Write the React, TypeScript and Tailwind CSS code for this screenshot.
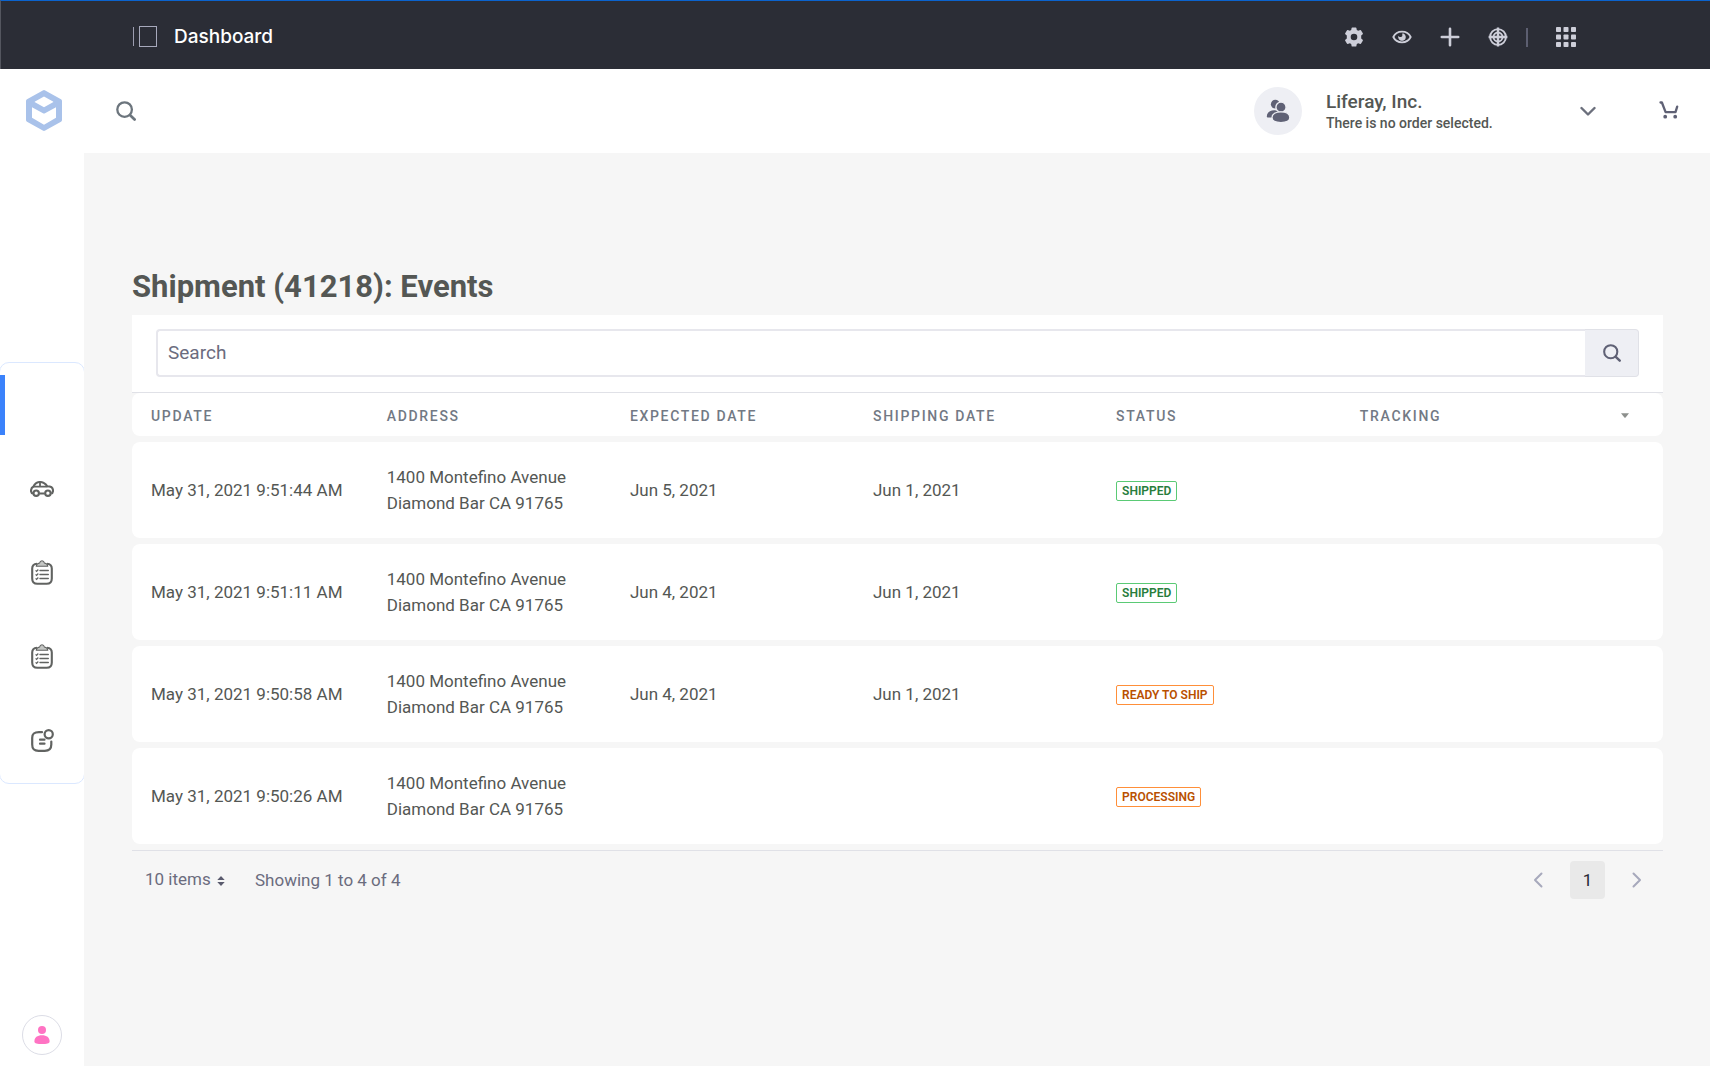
import React from "react";

type Tone = "success" | "warning";

interface Shipment {
  update: string;
  expected: string;
  shipping: string;
  status: string;
  tone: Tone;
}

const shipments: Shipment[] = [
  { update: "May 31, 2021 9:51:44 AM", expected: "Jun 5, 2021", shipping: "Jun 1, 2021", status: "SHIPPED", tone: "success" },
  { update: "May 31, 2021 9:51:11 AM", expected: "Jun 4, 2021", shipping: "Jun 1, 2021", status: "SHIPPED", tone: "success" },
  { update: "May 31, 2021 9:50:58 AM", expected: "Jun 4, 2021", shipping: "Jun 1, 2021", status: "READY TO SHIP", tone: "warning" },
  { update: "May 31, 2021 9:50:26 AM", expected: "", shipping: "", status: "PROCESSING", tone: "warning" },
];

const toneClass: Record<Tone, string> = {
  success: "border-[#5aca75] text-[#287d3c]",
  warning: "border-[#ff8f39] text-[#b95000]",
};

function GearIcon() {
  return (
    <svg viewBox="0 0 20 20" className="size-5" fill="currentColor" aria-hidden="true">
      <path
        fillRule="evenodd"
        d="M7.600 1Q7.700 .4 8.300 .4h3.400q.6 0 .7.600l.4 2 1.400.8 2-.7q.6-.2.900.3l1.700 2.900q.300.500-.1.900L17.200 8.600v2.800l1.500 1.400q.400.400.1.900L17.100 16.600q-.3.500-.9.300L14.200 16.200l-1.400.8-.4 2q-.1.600-.7.600H8.300q-.6 0-.7-.6l-.4-2L5.800 16.200l-2 .7q-.6.200-.9-.3L1.200 13.700q-.3-.5.1-.9l1.500-1.400V8.600L1.300 7.200q-.4-.4-.1-.9L2.900 3.400q.3-.5.9-.3L5.800 3.800 7.200 3zM10 6.700a3.300 3.300 0 1 0 0 6.600 3.300 3.300 0 0 0 0-6.600z"
      />
    </svg>
  );
}

function EyeIcon() {
  return (
    <svg viewBox="0 0 20 20" className="size-5" fill="none" aria-hidden="true">
      <path d="M1.300 10C3 6.500 6.200 4.700 10 4.700s7 1.800 8.700 5.300c-1.700 3.500-4.900 5.300-8.700 5.300S3 13.500 1.300 10z" stroke="currentColor" strokeWidth="1.800" strokeLinejoin="round" />
      <path fillRule="evenodd" d="M10.600 6.300a3.800 3.800 0 1 1-4.200 2.500c.5 1 1.500 1.500 2.500 1.200 1.100-.2 1.700-1.200 1.400-2.300-.1-.6 0-1 .3-1.400z" fill="currentColor" />
    </svg>
  );
}

function PlusIcon() {
  return (
    <svg viewBox="0 0 20 20" className="size-5" fill="none" stroke="currentColor" strokeWidth="2.600" strokeLinecap="round" aria-hidden="true">
      <path d="M10 1.800v16.400M1.800 10h16.400" />
    </svg>
  );
}

function TargetIcon() {
  return (
    <svg viewBox="0 0 20 20" className="size-5" fill="none" stroke="currentColor" strokeWidth="1.900" aria-hidden="true">
      <circle cx="10" cy="10" r="7.900" />
      <circle cx="10" cy="10" r="4.500" />
      <path d="M10 .6v18.800M.6 10h18.800" strokeWidth="2.400" />
    </svg>
  );
}

function GridIcon() {
  return (
    <svg viewBox="0 0 20 20" className="size-5" fill="currentColor" aria-hidden="true">
      {[0, 7.5, 15].map((y) => [0, 7.5, 15].map((x) => <rect key={`${x}-${y}`} x={x} y={y} width="5" height="5" rx="0.800" />))}
    </svg>
  );
}

function SearchIcon({ className }: { className: string }) {
  return (
    <svg viewBox="0 0 20 20" className={className} fill="none" stroke="currentColor" strokeWidth="2.300" strokeLinecap="round" aria-hidden="true">
      <circle cx="8.600" cy="8.600" r="7.300" />
      <path d="M14.200 14.200l4.400 4.300" strokeWidth="2.700" />
    </svg>
  );
}

function LogoIcon() {
  return (
    <svg viewBox="0 0 36 41" className="mb-0.5 h-[41px] w-9" aria-hidden="true">
      <path
        fill="#a9c2ea"
        fillRule="evenodd"
        d="M16.800.4q1.200-.6 2.400 0L35 9.300q1 .6 1 1.800v18.800q0 1.200-1 1.800l-15.800 8.900q-1.200.6-2.400 0L1 31.700q-1-.6-1-1.800V11.100q0-1.200 1-1.800zM18 6.400L9 11.500q-.6.400 0 .8l9 5 9-5q.6-.4 0-.8zM6 17.200v10.500l12 7 12-7V17.200l-11 6.100q-1 .5-2 0z"
      />
    </svg>
  );
}

function UsersIcon() {
  return (
    <svg viewBox="0 0 24 24" className="size-6" fill="#5f6175" aria-hidden="true">
      <circle cx="9.300" cy="5.200" r="4.400" />
      <path d="M.8 17.800C.6 13.600 4.300 11 8.600 11.200L13 12 7.500 18.600H1.700q-.8 0-.9-.8z" />
      <circle cx="15" cy="8.200" r="5.100" stroke="#eeeff4" strokeWidth="1.400" />
      <path d="M6 18.600c0-3.700 3.800-5.800 8.900-5.800s8.900 2.100 8.900 5.800-3.800 4.900-8.900 4.900-8.900-1.200-8.900-4.900z" stroke="#eeeff4" strokeWidth="1.200" />
    </svg>
  );
}

function CartIcon() {
  return (
    <svg viewBox="0 0 20 18" className="mb-0.5 h-[18px] w-5" fill="none" stroke="#5f6175" strokeWidth="2.300" strokeLinecap="round" strokeLinejoin="round" aria-hidden="true">
      <path d="M1.500 1.500h1.400l3.700 9.700h9.900l1.700-5.500" />
      <circle cx="6.200" cy="15.700" r="1" fill="#5f6175" strokeWidth="1.800" />
      <circle cx="16.200" cy="15.700" r="1" fill="#5f6175" strokeWidth="1.800" />
    </svg>
  );
}

function CarIcon() {
  return (
    <svg viewBox="0 0 24 16" className="h-4 w-6" fill="none" stroke="#616361" strokeWidth="2.100" strokeLinejoin="round" aria-hidden="true">
      <path d="M3 12.500C1.600 12.300 1 11.300 1 9.800 1 7.500 2 6.300 3.500 5.500 5 2.300 7 1 10 1c3.200 0 5.300 1.300 7.300 4.300 3.700 0 5.700 1.200 5.700 4.200 0 1.900-.6 2.800-1.800 3M9.300 12.500h5.500" />
      <path d="M3.500 5.700h14M10 1v4.500" strokeWidth="1.800" />
      <circle cx="6.200" cy="12.200" r="2.700" />
      <circle cx="17.900" cy="12.200" r="2.700" />
    </svg>
  );
}

function ClipboardIcon() {
  return (
    <svg viewBox="0 0 22 25" className="mb-0.5 h-[25px] w-[22px]" fill="none" stroke="#616361" aria-hidden="true">
      <path d="M6 3.700C2.600 3.900 1.200 5.400 1.200 8.600v9.800c0 3.800 1.600 5.400 5.200 5.400h9.200c3.600 0 5.200-1.600 5.200-5.400V8.600c0-3.200-1.400-4.700-4.800-4.900" strokeWidth="2.100" />
      <path d="M5.300 6.200c0-2.200 1.400-2.900 3.300-3.200C8.900 1.500 9.700.8 11 .8s2.100.7 2.400 2.200c1.900.3 3.300 1 3.300 3.200z" strokeWidth="1.100" fill="#c4c6c4" />
      <path d="M9 10.500h8.300M9 14.500h8.300M9 18.500h8.300" strokeWidth="1.400" strokeLinecap="round" />
      <path d="M4.600 10.400l1 1L7.300 9.500M4.600 14.400l1 1 1.700-1.900M4.600 18.400l1 1 1.700-1.900" strokeWidth="1.200" />
    </svg>
  );
}

function NoteIcon() {
  return (
    <svg viewBox="0 0 23 23" className="mb-0.5 size-[23px]" fill="none" stroke="#616361" strokeWidth="2.200" strokeLinecap="round" aria-hidden="true">
      <path d="M11 3.200H8C3 3.200 1.200 4.700 1.200 9v6.500c0 4.600 1.700 6.300 6.300 6.300h6.300c4.600 0 6.500-1.700 6.500-6.300v-3" />
      <circle cx="17.700" cy="5.300" r="4.100" />
      <path d="M9 10.700h4.500M9 14.700h4.500" />
    </svg>
  );
}

function Chevron({ points, className, width = 2 }: { points: string; className: string; width?: number }) {
  return (
    <svg viewBox="0 0 16 16" className={className} fill="none" stroke="currentColor" strokeWidth={width} strokeLinecap="round" strokeLinejoin="round" aria-hidden="true">
      <polyline points={points} />
    </svg>
  );
}

function TopBar() {
  return (
    <header className="flex h-[69px] shrink-0 items-center justify-between border-t border-l border-t-[#0b63ce] border-l-[#54565f] bg-[#2b2d36] pr-[134px] pl-[132px]">
      <div className="flex items-center">
        <span className="mt-0.5 h-[19px] w-px bg-[#9c9db0]" />
        <span className="mt-0.5 ml-[5px] h-[21px] w-[18px] border border-[#a7a9bc]" />
        <h1 className="mt-1 ml-[17px] font-[Inter] text-[19px] leading-6 font-medium text-white">Dashboard</h1>
      </div>
      <nav aria-label="Tools" className="mt-1 flex items-center text-[#cdced9]">
        <div className="flex gap-7">
          <button type="button" aria-label="Settings"><GearIcon /></button>
          <button type="button" aria-label="Preview"><EyeIcon /></button>
          <button type="button" aria-label="Add"><PlusIcon /></button>
          <button type="button" aria-label="Simulation"><TargetIcon /></button>
        </div>
        <span className="mr-7 ml-[18px] h-[19px] w-0.5 bg-[#5c5e70]" />
        <button type="button" aria-label="Applications"><GridIcon /></button>
      </nav>
    </header>
  );
}

function Sidebar() {
  const items = [
    { label: "Catalog", icon: <CarIcon /> },
    { label: "Orders", icon: <ClipboardIcon /> },
    { label: "Lists", icon: <ClipboardIcon /> },
    { label: "Shipments", icon: <NoteIcon /> },
  ];
  return (
    <aside className="flex w-[84px] shrink-0 flex-col overflow-hidden bg-white">
      <a href="#home" aria-label="Home" className="flex h-[84px] items-center pl-[26px]">
        <LogoIcon />
      </a>
      <div className="flex-1" />
      <nav aria-label="Main" className="-mx-px rounded-[10px] border border-[#dbe8ff]">
        <a href="#dashboard" aria-label="Overview" className="flex h-[84px] items-center">
          <span className="h-[60px] w-[5px] bg-[#3b82fb]" />
        </a>
        {items.map((item) => (
          <a key={item.label} href={`#${item.label.toLowerCase()}`} aria-label={item.label} className="flex h-[84px] items-center justify-center">
            {item.icon}
          </a>
        ))}
      </nav>
      <div className="flex-1" />
      <div className="flex h-[73px] items-end justify-center pb-[11px]">
        <button type="button" aria-label="User profile" className="flex size-10 items-center justify-center rounded-full border border-[#dcdde6]">
          <svg viewBox="0 0 16 18" className="h-[18px] w-4" fill="#ff73c3" aria-hidden="true">
            <circle cx="8" cy="4" r="4" />
            <path d="M.4 15.500C.4 11.500 3.300 9.300 8 9.300s7.600 2.200 7.600 6.200c0 1.900-3 2.500-7.600 2.500S.4 17.400.4 15.500z" />
          </svg>
        </button>
      </div>
    </aside>
  );
}

function StoreHeader() {
  return (
    <div className="flex h-[84px] shrink-0 items-center justify-between bg-white pr-[31px] pl-8">
      <button type="button" aria-label="Search the store" className="text-[#6c757d]">
        <SearchIcon className="size-5" />
      </button>
      <div className="flex items-center">
        <button type="button" className="flex items-center text-left text-[#545754]">
          <span className="flex size-12 items-center justify-center rounded-full bg-[#eeeff4]">
            <UsersIcon />
          </span>
          <span className="ml-6 flex w-[252px] flex-col font-medium">
            <span className="text-[19px] leading-6">Liferay, Inc.</span>
            <span className="text-sm leading-[18px]">There is no order selected.</span>
          </span>
          <Chevron points="1.500,5 8,11.500 14.500,5" width={2.4} className="ml-0.5 size-4 text-[#6b6f7c]" />
        </button>
        <button type="button" aria-label="Cart" className="ml-[63px]">
          <CartIcon />
        </button>
      </div>
    </div>
  );
}

function ShipmentTable() {
  const th = "px-[19px] pt-0.5 text-left font-medium";
  const td = "px-[19px]";
  return (
    <table className="-mt-1.5 w-full table-fixed border-separate border-spacing-x-0 border-spacing-y-1.5 text-[#545754]">
      <colgroup>
        <col className="w-[15.4%]" />
        <col className="w-[15.88%]" />
        <col className="w-[15.88%]" />
        <col className="w-[15.88%]" />
        <col className="w-[15.92%]" />
        <col />
      </colgroup>
      <thead>
        <tr className="h-[43px] bg-white text-sm tracking-[0.12em] text-[#727984]">
          <th scope="col" className={`${th} rounded-l-lg`}>UPDATE</th>
          <th scope="col" className={th}>ADDRESS</th>
          <th scope="col" className={th}>EXPECTED DATE</th>
          <th scope="col" className={th}>SHIPPING DATE</th>
          <th scope="col" className={th}>STATUS</th>
          <th scope="col" className="rounded-r-lg pt-0.5 pr-[34px] pl-[19px] text-left font-medium">
            <span className="flex items-center justify-between">
              TRACKING
              <button type="button" aria-label="Choose columns">
                <svg viewBox="0 0 8 5" className="h-[5px] w-2" fill="#8d908d" aria-hidden="true">
                  <path d="M0 .2h8L4.600 4.500q-.6.600-1.200 0z" />
                </svg>
              </button>
            </span>
          </th>
        </tr>
      </thead>
      <tbody>
        {shipments.map((row) => (
          <tr key={row.update} className="h-24 bg-white text-[17px] leading-[26px]">
            <td className={`${td} rounded-l-lg whitespace-nowrap`}>{row.update}</td>
            <td className={td}>
              1400 Montefino Avenue
              <br />
              Diamond Bar CA 91765
            </td>
            <td className={td}>{row.expected}</td>
            <td className={td}>{row.shipping}</td>
            <td className={`${td} pt-0.5`}>
              <span className={`flex h-5 w-fit items-center rounded-xs border px-[5px] text-xs font-semibold whitespace-nowrap ${toneClass[row.tone]}`}>
                {row.status}
              </span>
            </td>
            <td className={`${td} rounded-r-lg`} />
          </tr>
        ))}
      </tbody>
    </table>
  );
}

function Pagination() {
  return (
    <div className="flex items-center justify-between border-t border-[#e0e1e7] pt-2.5 pr-[18px] pl-[13px] text-[17px] text-[#6b6c7e]">
      <div className="flex items-center">
        <div className="flex items-center">
          <select aria-label="Items per page" className="h-8 appearance-none bg-transparent">
            <option>10 items</option>
          </select>
          <svg viewBox="0 0 8 10" className="mt-0.5 ml-1.5 h-2.5 w-2" fill="#5a5b6e" aria-hidden="true">
            <path d="M.3 4L3.500.4q.5-.5 1 0L7.700 4zM.3 6h7.400L4.500 9.600q-.5.500-1 0z" />
          </svg>
        </div>
        <span className="mt-0.5 ml-[30px]">Showing 1 to 4 of 4</span>
      </div>
      <nav aria-label="Pages" className="flex items-center text-[#a7a9bc]">
        <button type="button" aria-label="Previous page">
          <Chevron points="11.500,1.500 5,8 11.500,14.500" className="size-4" />
        </button>
        <button type="button" aria-current="page" className="mx-6 flex h-[38px] w-[35px] items-center justify-center rounded bg-[#e9e9e9] pt-0.5 text-[#272833]">
          1
        </button>
        <button type="button" aria-label="Next page">
          <Chevron points="4.500,1.500 11,8 4.500,14.500" className="size-4" />
        </button>
      </nav>
    </div>
  );
}

export default function App() {
  return (
    <div className="flex min-h-screen flex-col bg-[#f6f6f6] font-[Roboto,sans-serif]">
      <TopBar />
      <div className="flex flex-1">
        <Sidebar />
        <div className="flex min-w-0 flex-1 flex-col">
          <StoreHeader />
          <main className="pt-[114px] pr-[47px] pl-12">
            <h2 className="mb-2 text-[31px] leading-10 font-bold text-[#545754]">Shipment (41218): Events</h2>
            <form className="border-b border-[#e0e1e7] bg-white px-6 pt-3.5 pb-[15px]" onSubmit={(e) => e.preventDefault()}>
              <div className="flex h-12">
                <input
                  type="search"
                  aria-label="Search shipments"
                  placeholder="Search"
                  className="min-w-0 flex-1 rounded-l border-2 border-r-0 border-[#e7e7ed] px-2.5 text-[19px] outline-none placeholder:text-[#6b6c7e]"
                />
                <button type="submit" aria-label="Search" className="flex w-[54px] items-center justify-center rounded-r border border-l-0 border-[#e0e1e7] bg-[#eeeff4] text-[#5f6175]">
                  <SearchIcon className="size-[18px]" />
                </button>
              </div>
            </form>
            <ShipmentTable />
            <Pagination />
          </main>
        </div>
      </div>
    </div>
  );
}
